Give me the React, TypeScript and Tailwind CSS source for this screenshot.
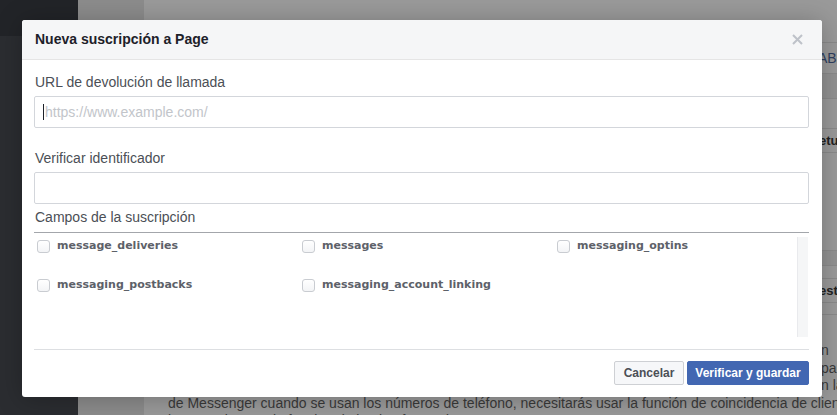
import React from "react";

const sans = { fontFamily: '"Liberation Sans", Arial, sans-serif' };
const dv = { fontFamily: '"DejaVu Sans", Verdana, sans-serif' };

function Check({ label }: { label: string }) {
  return (
    <div className="flex items-center h-[16px]">
      <span className="w-[13px] h-[13px] rounded-[3px] border border-[#c9ccd1] bg-gradient-to-b from-white to-[#f3f4f6] shrink-0" />
      <span className="ml-[7px] text-[11px] font-bold text-[#5d6169] whitespace-nowrap" style={dv}>
        {label}
      </span>
    </div>
  );
}

export default function App() {
  return (
    <div className="relative w-[837px] h-[415px] overflow-hidden flex bg-[#9a9a9a]" style={sans}>
      {/* sidebar */}
      <div className="w-[78px] shrink-0 flex flex-col">
        <div className="h-[36px] bg-[#222428]" />
        <div className="flex-1 bg-[#2b2d31]" />
      </div>
      <div className="w-[66px] shrink-0 bg-[#8c8c8c]" />
      {/* content */}
      <div className="flex-1 min-w-0 flex flex-col">
        <div className="flex h-[342px] shrink-0">
          <div className="w-[678px] shrink-0" />
          <div className="flex-1 min-w-0 overflow-hidden flex flex-col text-[14px] whitespace-nowrap">
            <div className="h-[42px] shrink-0" />
            <div className="h-[31px] shrink-0 border-t border-[#8a8a8a] flex items-center -ml-[4px] text-[#2f3f60]">ABJ</div>
            <div className="h-[25px] shrink-0 border-t border-[#8a8a8a] bg-[#929292]" />
            <div className="h-[30px] shrink-0 border-t border-[#8a8a8a]" />
            <div className="h-[24px] shrink-0 border-t border-[#8a8a8a] flex items-center -ml-[3px] font-bold text-[13px] text-[#222]">etu</div>
            <div className="h-[98px] shrink-0 border-t border-[#8a8a8a]" />
            <div className="h-[15px] shrink-0 border-t border-[#8a8a8a] bg-[#929292]" />
            <div className="h-[13px] shrink-0 border-t border-[#8a8a8a]" />
            <div className="h-[24px] shrink-0 border-t border-[#8a8a8a] flex items-center -ml-[3px] font-bold text-[13px] text-[#222]">est</div>
            <div className="h-[12px] shrink-0 border-t border-[#8a8a8a]" />
            <div className="flex-1 border-t border-[#8a8a8a]" />
          </div>
        </div>
        <div className="flex flex-col text-[14px] leading-[17.5px] text-[#3a3a3a] whitespace-nowrap">
          <div className="pl-[677px]">n</div>
          <div className="pl-[677px]">par</div>
          <div className="pl-[677px]">n la</div>
          <div className="pl-[24px]">de Messenger cuando se usan los números de teléfono, necesitarás usar la función de coincidencia de clientes</div>
          <div className="pl-[24px]">los usuarios con la funcion de la plataforma de Messenger.</div>
        </div>
      </div>

      {/* dialog */}
      <div className="absolute left-[22px] top-[20px] w-[800px] h-[377px] bg-white rounded-[3px] shadow-[0_2px_26px_rgba(0,0,0,0.25)] flex flex-col overflow-hidden">
        <div className="h-[40px] shrink-0 bg-[#f5f6f7] border-b border-[#e5e5e5] flex items-center justify-between pl-[13px] pr-[19px]">
          <span className="text-[14px] font-bold text-[#1d2129]">Nueva suscripción a Page</span>
          <svg width="11" height="11" viewBox="0 0 11 11">
            <path d="M1 1 L10 10 M10 1 L1 10" stroke="#bec2c9" strokeWidth="2" />
          </svg>
        </div>
        <div className="flex flex-col px-[12px] pt-[13px]">
          <div className="text-[14px] leading-[18px] text-[#4b4f56] pl-[1px]">URL de devolución de llamada</div>
          <div className="mt-[5px] mr-[1px] h-[32px] border border-[#d3d6db] rounded-[2px] flex items-center pl-[8px]">
            <span className="w-[1px] h-[16px] bg-[#1d2129]" />
            <span className="ml-[1px] text-[14px] text-[#c2c5ca]">https://www.example.com/</span>
          </div>
          <div className="mt-[21px] text-[14px] leading-[18px] text-[#4b4f56] pl-[1px]">Verificar identificador</div>
          <div className="mt-[5px] mr-[1px] h-[32px] border border-[#d3d6db] rounded-[2px]" />
          <div className="mt-[4px] mr-[1px] pb-[6px] border-b border-[#a3a6ab] text-[14px] leading-[18px] text-[#4b4f56] pl-[1px]">
            Campos de la suscripción
          </div>
          <div className="h-[117px] flex mr-[1px] border-b border-[#dddfe2]">
            <div className="flex-1 pl-[3px] pt-[5px] flex flex-col gap-[23px]">
              <div className="flex">
                <div className="w-[265px]"><Check label="message_deliveries" /></div>
                <div className="w-[255px]"><Check label="messages" /></div>
                <div><Check label="messaging_optins" /></div>
              </div>
              <div className="flex">
                <div className="w-[265px]"><Check label="messaging_postbacks" /></div>
                <div className="w-[255px]"><Check label="messaging_account_linking" /></div>
              </div>
            </div>
            <div className="w-[11px] mr-[1px] mt-[4px] mb-[12px] bg-[#f5f6f7] border-l border-[#e9eaed]" />
          </div>
          <div className="flex justify-end gap-[3px] pt-[11px] pr-[1px]">
            <button className="h-[24px] w-[70px] rounded-[2px] border border-[#ced0d4] bg-[#f6f7f9] text-[12px] font-bold text-[#4b4f56]">
              Cancelar
            </button>
            <button className="h-[24px] w-[122px] rounded-[2px] border border-[#4267b2] bg-[#4267b2] text-[12px] font-bold text-white">
              Verificar y guardar
            </button>
          </div>
        </div>
      </div>
    </div>
  );
}
